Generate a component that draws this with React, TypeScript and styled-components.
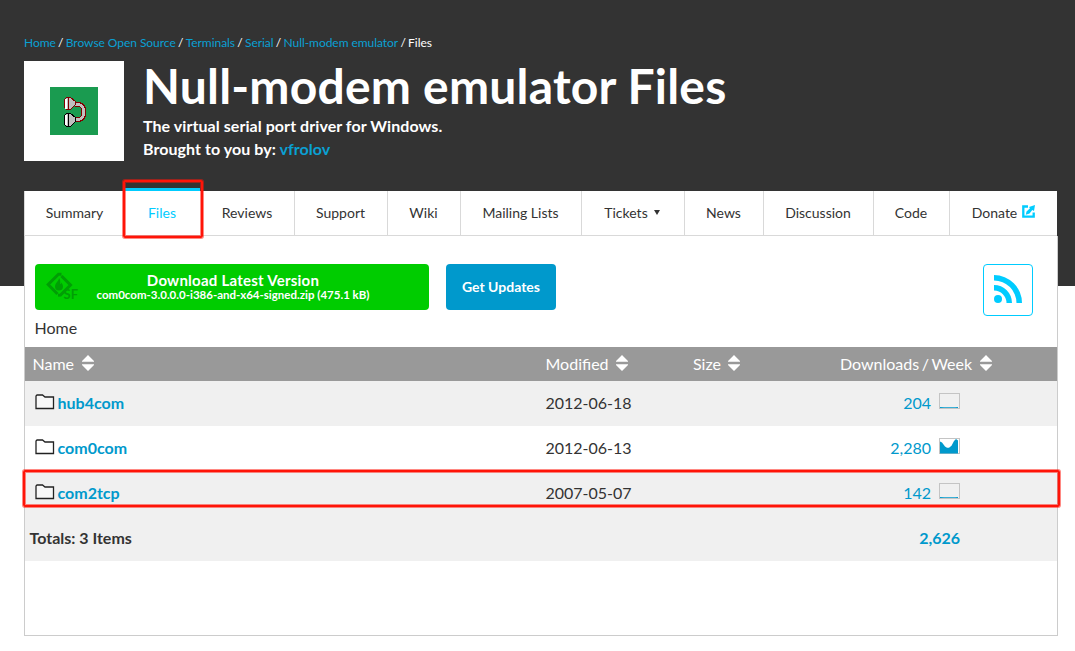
import React from 'react';
import styled, { createGlobalStyle, css } from 'styled-components';

const GlobalStyle = createGlobalStyle`
  * { box-sizing: border-box; }
  body {
    margin: 0;
    background: #fff;
    color: #333;
    font-family: Lato, 'Open Sans', sans-serif;
    font-size: 16px;
  }
  h1, h2, p { margin: 0; }
  a { color: #09c; text-decoration: none; }
  svg { flex-shrink: 0; }
`;

const Page = styled.div`
  position: relative;
  width: 1075px;
  height: 651px;
  padding: 0 17px 0 24px;
  overflow: hidden;
  background: linear-gradient(#333 286px, #fff 286px);
`;

const Breadcrumbs = styled.nav`
  display: flex;
  gap: 2.3px;
  padding-top: 35px;
  height: 61px;
  line-height: 16px;
  font-size: 12px;
  letter-spacing: -0.05px;
  color: #fff;
  white-space: nowrap;
  a { color: #0aa0d3; }
`;

const Project = styled.header`
  display: flex;
  gap: 19px;
  height: 130px;
`;

const ProjectIcon = styled.div`
  display: flex;
  align-items: center;
  justify-content: center;
  width: 100px;
  height: 100px;
  background: #fff;
`;

const ProjectText = styled.div`
  color: #fff;
  white-space: nowrap;
`;

const Title = styled.h1`
  height: 53px;
  line-height: 50px;
  font-size: 48px;
  font-weight: 700;
  letter-spacing: 0.2px;
`;

const Tagline = styled.p`
  line-height: 23px;
  font-size: 16px;
  font-weight: 700;
  letter-spacing: 0.06px;
  a { color: #0aa0d3; }
`;

const Tabs = styled.nav`
  display: flex;
  height: 45px;
  width: 1033px;
  background: #fff;
  border-bottom: 1px solid #d9d9d9;
`;

const Tab = styled.a<{ $width: number; $active?: boolean; $plain?: boolean }>`
  display: flex;
  align-items: center;
  justify-content: center;
  width: ${p => p.$width}px;
  height: 44px;
  padding: 0 1px 1px 0;
  font-size: 14px;
  color: #333;
  white-space: nowrap;
  border-left: 1px solid ${p => (p.$plain ? 'transparent' : '#d9d9d9')};
  ${p =>
    p.$active &&
    css`
      height: 47px;
      margin-top: -3px;
      border-top: 3px solid #0cf;
      border-left: 0;
      background: #fff;
      color: #0cf;
    `}
`;

const Caret = styled.span`
  margin-left: 6px;
  margin-right: 1px;
  border: 3px solid transparent;
  border-top: 5px solid #333;
  border-bottom: 0;
`;

const Panel = styled.main`
  width: 1034px;
  height: 400px;
  padding-top: 28px;
  background: #fff;
  border: 1px solid #ccc;
  border-top: 0;
`;

const Actions = styled.div`
  display: flex;
  align-items: flex-start;
  height: 53px;
  padding: 0 24px 0 10px;
`;

const Download = styled.a`
  display: flex;
  align-items: center;
  width: 394px;
  height: 46px;
  padding-left: 11px;
  border-radius: 4px;
  background: #0c0;
  color: #fff;
`;

const DownloadText = styled.div`
  width: 300px;
  margin-left: -1px;
  margin-top: -1px;
  text-align: center;
  font-weight: 700;
  white-space: nowrap;
`;

const DownloadTitle = styled.div`
  line-height: 16px;
  font-size: 15px;
  letter-spacing: 0.24px;
`;

const DownloadFile = styled.div`
  line-height: 13px;
  font-size: 11.5px;
`;

const Updates = styled.a`
  width: 110px;
  height: 46px;
  margin-left: 17px;
  border-radius: 4px;
  background: #09c;
  color: #fff;
  line-height: 46px;
  text-align: center;
  font-size: 14px;
  font-weight: 700;
`;

const Feed = styled.a`
  display: flex;
  align-items: center;
  justify-content: center;
  width: 50px;
  height: 52px;
  padding-bottom: 2px;
  margin-left: auto;
  border: 1px solid #0cf;
  border-radius: 4px;
`;

const Location = styled.div`
  height: 30px;
  padding-left: 9.5px;
  line-height: 22px;
`;

const columns = css`
  display: grid;
  grid-template-columns: 520.5px 147.5px 147px 120px;
  align-items: center;
`;

const HeadRow = styled.div`
  ${columns}
  height: 34px;
  padding-bottom: 2px;
  background: #999;
  color: #fff;
`;

const HeadCell = styled.div<{ $inset?: number }>`
  display: flex;
  align-items: center;
  gap: 7.500px;
  padding-left: ${p => p.$inset ?? 0}px;
  white-space: nowrap;
  word-spacing: -1.5px;
`;

const Row = styled.div<{ $shaded?: boolean }>`
  ${columns}
  height: 45px;
  padding-bottom: 2px;
  background: ${p => (p.$shaded ? '#f0f0f0' : '#fff')};
`;

const NameCell = styled.div`
  display: flex;
  align-items: center;
  gap: 3px;
  padding-left: 9.5px;
  font-weight: 700;
  svg { margin-top: -1px; }
`;

const DownloadsCell = styled.div`
  display: flex;
  grid-column: 4;
  align-items: center;
  justify-content: flex-end;
  gap: 8px;
  color: #09c;
  svg { margin-top: -3px; }
`;

const Totals = styled.div`
  padding-left: 4.5px;
  font-weight: 700;
`;

const TotalCount = styled(DownloadsCell)`
  font-weight: 700;
`;

const Marker = styled.div<{ $x: number; $y: number; $w: number; $h: number }>`
  position: absolute;
  left: ${p => p.$x}px;
  top: ${p => p.$y}px;
  width: ${p => p.$w}px;
  height: ${p => p.$h}px;
  border: 2px solid #ff1408;
  border-radius: 2px;
  box-shadow: 0 0 0 1px rgba(255, 20, 8, 0.5), inset 0 0 0 1px rgba(255, 20, 8, 0.5);
  pointer-events: none;
`;

const ModemIcon = () => (
  <svg width="48" height="48" viewBox="0 0 48 48" shapeRendering="crispEdges">
    <rect width="48" height="48" fill="#1a9b50" />
    <path d="M25 17.500h3c8 0 8 15 0 15h-3" fill="none" stroke="#800000" strokeWidth="5" />
    <path d="M25 17.500h3c8 0 8 15 0 15h-3" fill="none" stroke="#c0c0c0" strokeWidth="3" />
    <path d="M16.500 10.500h4l5 4v3l-5 5h-4l-2-2v-8z" fill="#c0c0c0" stroke="#800000" />
    <path d="M16.500 26.500h4l5 4v4l-5 5h-4l-2-2v-9z" fill="#c0c0c0" stroke="#000" />
    <path d="M16 12v10M16 28v10" stroke="#fff" strokeWidth="2" />
    <path d="M18.500 11v12" stroke="#800000" />
    <path d="M18.500 27v12" stroke="#000" />
  </svg>
);

const LinkOutSvg = styled.svg`
  margin-left: 5px;
  margin-right: -1px;
  margin-top: -2px;
`;

const ExternalIcon = () => (
  <LinkOutSvg width="13" height="13" viewBox="0 0 13 13">
    <path d="M6 1.500H1.300v10.200h10.400V7.500" fill="none" stroke="#0cf" strokeWidth="2.300" />
    <path d="M13 0L12 6l-1.700-1L7.500 8.500 3.800 9.800 4.500 6.500 8 3.200 7 2z" fill="#0cf" />
  </LinkOutSvg>
);

const SourceForgeMark = () => (
  <svg width="38" height="34" viewBox="0 -2 38 34">
    <g fill="none" stroke="#009e05" strokeWidth="3">
      <path d="M11.500 22L2.200 12.500 12.500 2.300h3" />
      <path d="M15.500 4l9 9L14.500 23l-2.500 .2" />
    </g>
    <path d="M13 6c0 3-4 5-4 8.500a4 4 0 0 0 8 0c0-2-1-3-1.500-4-.3 1-.7 1.500-1.300 1.500.4-2 0-4.500-1.200-6z" fill="#009e05" />
    <text x="17.500" y="27" fontSize="13" fontWeight="700" fontFamily="Lato" fill="#009e05">SF</text>
  </svg>
);

const FeedIcon = () => (
  <svg width="28" height="28" viewBox="0 0 28 28" fill="#0cf">
    <circle cx="4" cy="24" r="4" />
    <path d="M0 10a18 18 0 0 1 18 18h-5.500A12.500 12.500 0 0 0 0 15.500z" />
    <path d="M0 0a28 28 0 0 1 28 28h-5.500A22.500 22.500 0 0 0 0 5.500z" />
  </svg>
);

const SortIcon = () => (
  <svg width="12" height="16" viewBox="0 0 12 16" fill="#fff">
    <path d="M6 0l6 6v.8H0V6zM0 9.200h12v.8l-6 6-6-6z" />
  </svg>
);

const FolderIcon = () => (
  <svg width="20" height="16" viewBox="0 0 20 16">
    <path d="M1 14.500V2l1-1h5.500l2.500 2h8.500v11.500z" fill="#fff" fillOpacity=".5" stroke="#222" strokeWidth="1.300" />
  </svg>
);

const TrendIcon = ({ line }: { line: string }) => (
  <svg width="21" height="16" viewBox="0 0 21 16">
    <rect x=".5" y=".5" width="20" height="15" fill="none" stroke="#c4c4c4" />
    <path d={line} fill="#09c" />
  </svg>
);

const flat = 'M1 14l4 .3h11l3-.3v1H1z';
const tabs = [
  { label: 'Summary', width: 101 },
  { label: 'Files', width: 75, active: true },
  { label: 'Reviews', width: 94, plain: true },
  { label: 'Support', width: 93 },
  { label: 'Wiki', width: 73 },
  { label: 'Mailing Lists', width: 121 },
  { label: 'Tickets', width: 103, caret: true },
  { label: 'News', width: 79 },
  { label: 'Discussion', width: 110 },
  { label: 'Code', width: 76 },
  { label: 'Donate', width: 108, external: true },
];
const files = [
  { name: 'hub4com', date: '2012-06-18', count: '204', line: flat },
  { name: 'com0com', date: '2012-06-13', count: '2,280', line: 'M1 3.500l2 1L6 8.500l2 1.200h2l2.500-2L15 3l2-2 2 1.500V15.500H1z' },
  { name: 'com2tcp', date: '2007-05-07', count: '142', line: flat },
];
const crumbs = ['Home', 'Browse Open Source', 'Terminals', 'Serial', 'Null-modem emulator'];

export default function App() {
  return (
    <Page>
      <GlobalStyle />
      <Breadcrumbs>
        {crumbs.map(c => (
          <React.Fragment key={c}>
            <a>{c}</a>
            <span>/</span>
          </React.Fragment>
        ))}
        <span>Files</span>
      </Breadcrumbs>
      <Project>
        <ProjectIcon><ModemIcon /></ProjectIcon>
        <ProjectText>
          <Title>Null-modem emulator Files</Title>
          <Tagline>The virtual serial port driver for Windows.</Tagline>
          <Tagline>Brought to you by: <a>vfrolov</a></Tagline>
        </ProjectText>
      </Project>
      <Tabs>
        {tabs.map(t => (
          <Tab key={t.label} $width={t.width} $active={t.active} $plain={t.plain}>
            {t.label}
            {t.caret && <Caret />}
            {t.external && <ExternalIcon />}
          </Tab>
        ))}
      </Tabs>
      <Panel>
        <Actions>
          <Download>
            <SourceForgeMark />
            <DownloadText>
              <DownloadTitle>Download Latest Version</DownloadTitle>
              <DownloadFile>com0com-3.0.0.0-i386-and-x64-signed.zip (475.1 kB)</DownloadFile>
            </DownloadText>
          </Download>
          <Updates>Get Updates</Updates>
          <Feed><FeedIcon /></Feed>
        </Actions>
        <Location>Home</Location>
        <HeadRow>
          <HeadCell $inset={7.5}>Name <SortIcon /></HeadCell>
          <HeadCell>Modified <SortIcon /></HeadCell>
          <HeadCell>Size <SortIcon /></HeadCell>
          <HeadCell>Downloads / Week <SortIcon /></HeadCell>
        </HeadRow>
        {files.map((f, i) => (
          <Row key={f.name} $shaded={i % 2 === 0}>
            <NameCell><FolderIcon /><a>{f.name}</a></NameCell>
            <div>{f.date}</div>
            <DownloadsCell>{f.count}<TrendIcon line={f.line} /></DownloadsCell>
          </Row>
        ))}
        <Row $shaded>
          <Totals>Totals: 3 Items</Totals>
          <TotalCount>2,626</TotalCount>
        </Row>
      </Panel>
      <Marker $x={123} $y={180} $w={80} $h={58} />
      <Marker $x={23} $y={470} $w={1037} $h={37} />
    </Page>
  );
}
